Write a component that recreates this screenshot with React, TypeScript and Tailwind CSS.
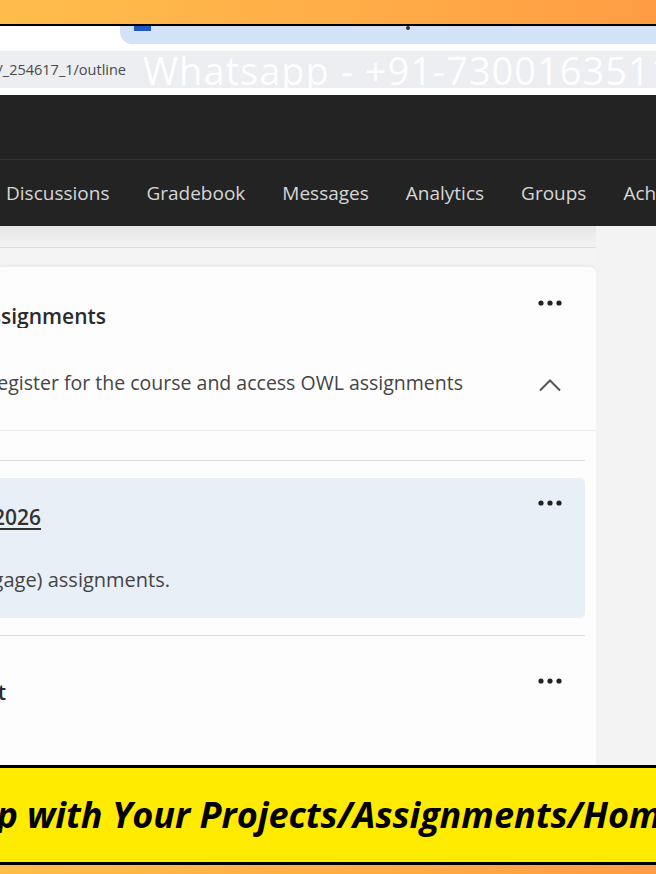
import React from 'react';

const Dots: React.FC = () => (
  <svg width="24" height="6" viewBox="0 0 24 6" className="shrink-0">
    <circle cx="3" cy="3" r="2.6" fill="#222" />
    <circle cx="12" cy="3" r="2.6" fill="#222" />
    <circle cx="21" cy="3" r="2.6" fill="#222" />
  </svg>
);

const ChevronUp: React.FC = () => (
  <svg width="24" height="14" viewBox="0 0 24 14" className="shrink-0">
    <polyline points="2,12.5 12,2.5 22,12.5" fill="none" stroke="#555" strokeWidth="2" />
  </svg>
);

// text cut off at the left edge of the frame, right end fixed by box width
const Clip: React.FC<{ width: string; className?: string; children: React.ReactNode }> = ({ width, className, children }) => (
  <div className={`${width} overflow-hidden flex justify-end shrink-0`}>
    <div className={`whitespace-nowrap ${className ?? ''}`}>{children}</div>
  </div>
);

const navItems = ['Discussions', 'Gradebook', 'Messages', 'Analytics', 'Groups', 'Achievements'];

export default function App() {
  return (
    <div className="w-[656px] h-[874px] overflow-hidden flex flex-col bg-white font-['Open_Sans',sans-serif]">
      {/* orange frame top */}
      <div className="h-[24px] shrink-0 bg-gradient-to-r from-[#ffbd4b] via-[#ffae48] to-[#ff9c44]" />
      <div className="h-[2px] shrink-0 bg-black" />

      {/* browser tab strip */}
      <div className="h-[18px] shrink-0 flex bg-white">
        <div className="ml-[120px] flex-1 bg-[#d4e2f7] rounded-bl-[12px] flex items-start">
          <div className="ml-[14px] w-[17px] h-[5px] bg-[#1d58c6]" />
          <div className="ml-[255px] w-[4px] h-[4px] rounded-full bg-[#333]" />
        </div>
      </div>
      <div className="h-[7px] shrink-0 bg-white" />

      {/* address bar with watermark */}
      <div className="h-[37px] shrink-0 bg-[#eceef1] flex items-center overflow-hidden">
        <Clip width="w-[126px]" className="text-[14.5px] text-[#4a4a4a]">
          ultra/courses/_254617_1/outline
        </Clip>
        <span className="ml-[17px] whitespace-nowrap text-white text-[38px] tracking-[1px] leading-none opacity-95">
          Whatsapp - +91-7300163511
        </span>
      </div>
      <div className="h-[7px] shrink-0 bg-white" />

      {/* dark course header */}
      <div className="h-[64px] shrink-0 bg-[#232323]" />
      <div className="h-[1px] shrink-0 bg-[#343434]" />
      <div className="h-[66px] shrink-0 bg-[#232323] flex items-center pl-[6px] gap-[37px] overflow-hidden">
        {navItems.map((item) => (
          <span key={item} className="text-[19px] text-[#d6d6d6] whitespace-nowrap">
            {item}
          </span>
        ))}
      </div>

      {/* content */}
      <div className="h-[539px] shrink-0 flex overflow-hidden bg-[#f4f4f4]">
        <div className="w-[596px] shrink-0 flex flex-col">
          <div className="h-[21px] shrink-0 bg-gradient-to-b from-[#e6e6e6] to-[#f3f3f3]" />
          <div className="h-[1px] shrink-0 bg-[#dcdcdc]" />
          <div className="h-[19px] shrink-0" />

          <div className="flex-1 bg-[#fdfdfd] rounded-tr-[6px] shadow-[0_0_4px_rgba(0,0,0,0.08)] flex flex-col">
            {/* module header */}
            <div className="flex items-start justify-between pr-[34px] pt-[30px]">
              <Clip width="w-[106px]" className="mt-[7px] text-[21px] leading-[24px] font-semibold text-[#2b2b2b]">
                OWL Assignments
              </Clip>
              <div className="h-[12px] flex items-center">
                <Dots />
              </div>
            </div>
            <div className="flex items-center justify-between pr-[34px] mt-[43px] pb-[35px] border-b border-[#ececec]">
              <Clip width="w-[463px]" className="text-[19.5px] leading-[24px] text-[#444]">
                Use this link to register for the course and access OWL assignments
              </Clip>
              <div className="mt-[3px]">
                <ChevronUp />
              </div>
            </div>

            <div className="mt-[29px] mr-[11px] h-[1px] shrink-0 bg-[#dddddd]" />

            {/* highlighted item */}
            <div className="mt-[17px] mr-[11px] h-[140px] shrink-0 bg-[#e9eff7] rounded-r-[5px] flex flex-col">
              <div className="flex items-start justify-between pr-[23px] pt-[19px]">
                <Clip width="w-[41px]" className="mt-[8px] pb-[4px] text-[21px] leading-[24px] font-semibold text-[#333]">
                  <span className="underline underline-offset-[3px]">Cengage OWL Spring 2026</span>
                </Clip>
                <div className="h-[12px] flex items-center">
                  <Dots />
                </div>
              </div>
              <div className="mt-[35px]">
                <Clip width="w-[170px]" className="text-[20px] leading-[24px] text-[#444]">
                  Click here to access your OWL (Cengage) assignments.
                </Clip>
              </div>
            </div>

            <div className="mt-[17px] mr-[11px] h-[1px] shrink-0 bg-[#dddddd]" />

            <div className="flex items-start justify-between pr-[34px] pt-[39px]">
              <Clip width="w-[6px]" className="mt-[5px] text-[21px] leading-[24px] font-semibold text-[#2b2b2b]">
                Course Content
              </Clip>
              <div className="h-[12px] flex items-center">
                <Dots />
              </div>
            </div>
          </div>
        </div>
        <div className="flex-1 bg-[#f3f3f3]" />
      </div>

      {/* promo banner */}
      <div className="h-[100px] shrink-0 bg-[#ffeb00] border-y-[3px] border-black flex items-center overflow-hidden">
        <Clip width="w-[18px]" className="text-[36px] font-bold italic text-black leading-none">
          Help
        </Clip>
        <span className="ml-[9px] whitespace-nowrap text-[36px] font-bold italic text-black leading-none">
          with Your Projects/Assignments/Homework
        </span>
      </div>
      <div className="h-[9px] shrink-0 bg-gradient-to-r from-[#ffbd4b] via-[#ffae48] to-[#ff9c44]" />
    </div>
  );
}
